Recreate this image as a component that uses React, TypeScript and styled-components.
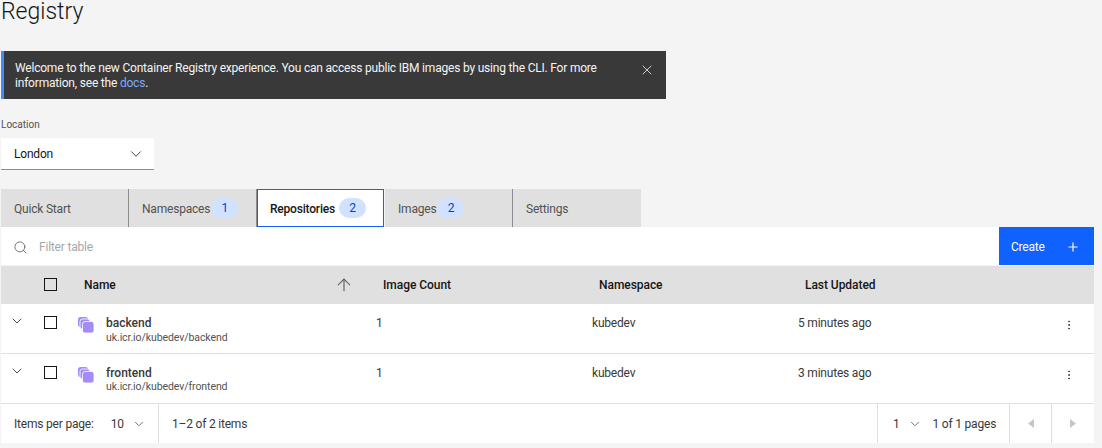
import React from 'react';
import styled, { createGlobalStyle } from 'styled-components';
import { ChevronDown, X, Search, ArrowUp, Plus, EllipsisVertical } from 'lucide-react';

const GlobalStyle = createGlobalStyle`
  html, body {
    margin: 0;
    padding: 0;
    background: #f4f4f4;
    font-family: Roboto, "Liberation Sans", Arial, sans-serif;
    color: #393939;
    letter-spacing: -0.2px;
  }
  * {
    box-sizing: border-box;
  }
`;

const Page = styled.div`
  width: 1102px;
  height: 448px;
  padding-left: 1px;
  overflow: hidden;
`;

const Title = styled.h1`
  margin: 0;
  height: 51px;
  font-size: 23px;
  font-weight: 300;
  line-height: 24px;
  letter-spacing: 0;
  color: #161616;
`;

const Banner = styled.div`
  width: 665px;
  height: 48px;
  padding: 10px 11px 0 11px;
  display: flex;
  justify-content: space-between;
  background: #393939;
  border-left: 3px solid #4589ff;
  color: #f4f4f4;
  font-size: 12px;
  line-height: 15px;

  a {
    color: #78a9ff;
  }
`;

const BannerText = styled.div`
  width: 600px;
`;

const BannerClose = styled.div`
  margin-top: 1px;
  height: 16px;
  color: #f4f4f4;
`;

const Location = styled.div`
  margin-top: 20px;
  width: 153px;
`;

const FieldLabel = styled.div`
  font-size: 10px;
  line-height: 11px;
  height: 19px;
  letter-spacing: 0;
  color: #525252;
`;

const SelectBox = styled.div`
  height: 32px;
  padding: 0 9px 0 13px;
  display: flex;
  align-items: center;
  justify-content: space-between;
  background: #fff;
  border-bottom: 1px solid #8d8d8d;
  font-size: 12px;
  color: #161616;
`;

const TabRow = styled.div`
  display: flex;
  margin-top: 19px;
  height: 38px;
`;

const Tab = styled.div<{ $active?: boolean; $last?: boolean }>`
  width: ${p => (p.$active ? '127px' : '128px')};
  margin-right: ${p => (p.$active ? '1px' : '0')};
  height: 38px;
  padding: 2px 0 0 13px;
  display: flex;
  align-items: center;
  gap: ${p => (p.$active ? '4px' : '1px')};
  font-size: 12px;
  background: ${p => (p.$active ? '#fff' : '#e0e0e0')};
  color: ${p => (p.$active ? '#161616' : '#525252')};
  border-right: 1px solid ${p => (p.$last ? '#e0e0e0' : '#8d8d8d')};
  font-weight: ${p => (p.$active ? 500 : 400)};
  ${p => p.$active && 'border: 1px solid #0f62fe; padding-left: 12px;'}
`;

const Count = styled.span`
  width: 27px;
  height: 20px;
  margin-top: -2px;
  border-radius: 10px;
  background: #d0e2ff;
  color: #0043ce;
  font-size: 12px;
  display: flex;
  align-items: center;
  justify-content: center;
  font-weight: 400;
`;

const Toolbar = styled.div`
  width: 1093px;
  height: 38px;
  display: flex;
  align-items: center;
  justify-content: space-between;
  background: #fff;
`;

const Filter = styled.div`
  display: flex;
  align-items: center;
  gap: 11px;
  padding: 2px 0 0 12px;
  font-size: 12px;
  color: #a8a8a8;

  svg {
    color: #525252;
  }
`;

const CreateButton = styled.button`
  width: 95px;
  height: 38px;
  padding: 1px 14px 0 12px;
  border: 0;
  display: flex;
  align-items: center;
  justify-content: space-between;
  background: #0f62fe;
  color: #fff;
  font-family: inherit;
  letter-spacing: inherit;
  font-size: 12px;
`;

const Row = styled.div<{ $head?: boolean }>`
  width: 1093px;
  display: grid;
  grid-template-columns: 36px 33px 299px 216px 206px 1fr 60px;
  height: ${p => (p.$head ? '38px' : '50px')};
  margin-top: ${p => (p.$head ? '1px' : '0')};
  background: ${p => (p.$head ? '#e0e0e0' : '#fff')};
  border-bottom: ${p => (p.$head ? '0' : '1px solid #e0e0e0')};
`;

const HeadCell = styled.div`
  padding: 0 0 1px 14px;
  display: flex;
  align-items: center;
  font-size: 12px;
  font-weight: 500;
  letter-spacing: -0.05px;
  color: #161616;
`;

const NameHead = styled(HeadCell)`
  justify-content: space-between;
  padding-right: 15px;

  svg {
    color: #525252;
  }
`;

const Cell = styled.div`
  padding: 12px 0 0 7px;
  font-size: 12px;
  line-height: 15px;
  color: #393939;
`;

const ExpandCell = styled.div`
  padding: 9px 0 0 8px;
  color: #393939;
`;

const CheckCell = styled.div`
  padding-top: 12px;
  padding-left: 7px;
`;

const Checkbox = styled.div`
  width: 13px;
  height: 13px;
  border: 1px solid #161616;
  background: transparent;
`;

const NameCell = styled.div`
  padding: 12px 0 0 8px;
  display: flex;
  gap: 12px;
`;

const RepoIcon = styled.svg`
  width: 16px;
  height: 16px;
  margin-top: 1px;
`;

const RepoName = styled.div`
  font-size: 12px;
  line-height: 15px;
  font-weight: 500;
  letter-spacing: 0;
  color: #393939;
`;

const RepoPath = styled.div<{ $tight?: boolean }>`
  margin-top: ${p => (p.$tight ? '-1px' : '0')};
  font-size: 10.5px;
  line-height: 14px;
  letter-spacing: -0.08px;
  color: #525252;
`;

const KebabCell = styled.div`
  padding: 12px 0 0 29px;
  color: #393939;
`;

const Pager = styled.div`
  width: 1093px;
  height: 39px;
  display: flex;
  background: #fff;
  font-size: 12px;
  color: #393939;
  white-space: nowrap;
`;

const PagerCell = styled.div<{ $w: number }>`
  width: ${p => p.$w}px;
  display: flex;
  align-items: center;
  padding-left: 13px;
  border-right: 1px solid #e0e0e0;
`;

const PerPageValue = styled.span`
  margin-left: 17px;
`;

const PagerChevron = styled.span`
  display: flex;
  align-items: center;
  margin-left: 8px;
  color: #525252;
`;

const PageNumber = styled(PagerCell)`
  padding-left: 15px;
`;

const PageOf = styled.span`
  margin-left: 11px;
`;

const ArrowCell = styled.div`
  width: 42px;
  display: flex;
  align-items: center;
  justify-content: center;
  border-right: 1px solid #e0e0e0;

  &:last-child {
    border-right: 0;
  }
`;

const repos = [
  { name: 'backend', count: 1, ns: 'kubedev', updated: '5 minutes ago' },
  { name: 'frontend', count: 1, ns: 'kubedev', updated: '3 minutes ago', tight: true },
];

const Stack = () => (
  <RepoIcon viewBox="0 0 16 16">
    <rect x="0" y="0" width="10" height="10" rx="2.5" fill="#a48cf8" />
    <rect x="2" y="2" width="10" height="10" rx="2.5" fill="#a48cf8" stroke="#fff" strokeWidth="0.8" />
    <rect x="4.5" y="4.5" width="11.5" height="11.5" rx="2.5" fill="#a48cf8" stroke="#fff" strokeWidth="0.8" />
  </RepoIcon>
);

const Caret = ({ left }: { left?: boolean }) => (
  <svg width="6" height="9" viewBox="0 0 6 9">
    <path d={left ? 'M6 0v9L0 4.5z' : 'M0 0v9l6-4.5z'} fill="#c6c6c6" />
  </svg>
);

export default function App() {
  return (
    <Page>
      <GlobalStyle />
      <Title>Registry</Title>
      <Banner>
        <BannerText>
          Welcome to the new Container Registry experience. You can access public IBM images by using the CLI. For more
          information, see the <a>docs</a>.
        </BannerText>
        <BannerClose>
          <X size={16} strokeWidth={1.2} />
        </BannerClose>
      </Banner>
      <Location>
        <FieldLabel>Location</FieldLabel>
        <SelectBox>
          London
          <ChevronDown size={18} strokeWidth={1.1} />
        </SelectBox>
      </Location>
      <TabRow>
        <Tab>Quick Start</Tab>
        <Tab>
          Namespaces <Count>1</Count>
        </Tab>
        <Tab $active>
          Repositories <Count>2</Count>
        </Tab>
        <Tab>
          Images <Count>2</Count>
        </Tab>
        <Tab $last>Settings</Tab>
      </TabRow>
      <Toolbar>
        <Filter>
          <Search size={15} strokeWidth={1.25} />
          Filter table
        </Filter>
        <CreateButton>
          Create
          <Plus size={14} strokeWidth={2} />
        </CreateButton>
      </Toolbar>
      <Row $head>
        <div />
        <CheckCell>
          <Checkbox />
        </CheckCell>
        <NameHead>
          Name
          <ArrowUp size={20} strokeWidth={1.25} />
        </NameHead>
        <HeadCell>Image Count</HeadCell>
        <HeadCell>Namespace</HeadCell>
        <HeadCell>Last Updated</HeadCell>
        <div />
      </Row>
      {repos.map(r => (
        <Row key={r.name}>
          <ExpandCell>
            <ChevronDown size={16} strokeWidth={1.4} />
          </ExpandCell>
          <CheckCell>
            <Checkbox />
          </CheckCell>
          <NameCell>
            <Stack />
            <div>
              <RepoName>{r.name}</RepoName>
              <RepoPath $tight={r.tight}>uk.icr.io/kubedev/{r.name}</RepoPath>
            </div>
          </NameCell>
          <Cell>{r.count}</Cell>
          <Cell>{r.ns}</Cell>
          <Cell>{r.updated}</Cell>
          <KebabCell>
            <EllipsisVertical size={12} strokeWidth={2} />
          </KebabCell>
        </Row>
      ))}
      <Pager>
        <PagerCell $w={158}>
          Items per page:
          <PerPageValue>10</PerPageValue>
          <PagerChevron>
            <ChevronDown size={14} strokeWidth={1.4} />
          </PagerChevron>
        </PagerCell>
        <PagerCell $w={719}>1–2 of 2 items</PagerCell>
        <PageNumber $w={132}>
          1
          <PagerChevron>
            <ChevronDown size={14} strokeWidth={1.4} />
          </PagerChevron>
          <PageOf>1 of 1 pages</PageOf>
        </PageNumber>
        <ArrowCell>
          <Caret left />
        </ArrowCell>
        <ArrowCell>
          <Caret />
        </ArrowCell>
      </Pager>
    </Page>
  );
}
